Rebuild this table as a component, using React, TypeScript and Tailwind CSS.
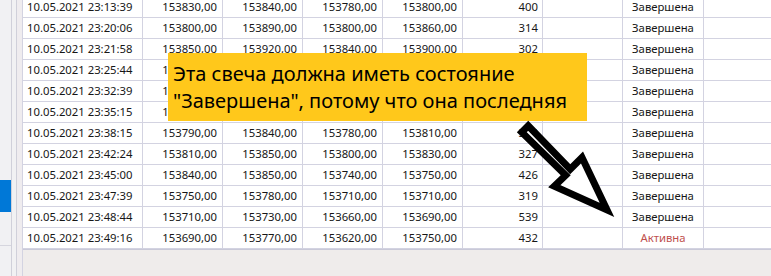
import React from "react";

type Row = {
  date: string;
  open: string;
  high: string;
  low: string;
  close: string;
  vol: string;
  state: "done" | "active";
};

const rows: Row[] = [
  { date: "10.05.2021 23:13:39", open: "153830,00", high: "153840,00", low: "153780,00", close: "153800,00", vol: "400", state: "done" },
  { date: "10.05.2021 23:20:06", open: "153800,00", high: "153890,00", low: "153800,00", close: "153860,00", vol: "314", state: "done" },
  { date: "10.05.2021 23:21:58", open: "153850,00", high: "153920,00", low: "153840,00", close: "153900,00", vol: "302", state: "done" },
  { date: "10.05.2021 23:25:44", open: "153890,00", high: "153910,00", low: "153820,00", close: "153850,00", vol: "287", state: "done" },
  { date: "10.05.2021 23:32:39", open: "153850,00", high: "153880,00", low: "153790,00", close: "153830,00", vol: "356", state: "done" },
  { date: "10.05.2021 23:35:15", open: "153830,00", high: "153860,00", low: "153770,00", close: "153790,00", vol: "341", state: "done" },
  { date: "10.05.2021 23:38:15", open: "153790,00", high: "153840,00", low: "153780,00", close: "153810,00", vol: "318", state: "done" },
  { date: "10.05.2021 23:42:24", open: "153810,00", high: "153850,00", low: "153800,00", close: "153830,00", vol: "327", state: "done" },
  { date: "10.05.2021 23:45:00", open: "153840,00", high: "153850,00", low: "153740,00", close: "153750,00", vol: "426", state: "done" },
  { date: "10.05.2021 23:47:39", open: "153750,00", high: "153780,00", low: "153710,00", close: "153710,00", vol: "319", state: "done" },
  { date: "10.05.2021 23:48:44", open: "153710,00", high: "153730,00", low: "153660,00", close: "153690,00", vol: "539", state: "done" },
  { date: "10.05.2021 23:49:16", open: "153690,00", high: "153770,00", low: "153620,00", close: "153750,00", vol: "432", state: "active" },
];

const cell = "h-[21px] border-r border-b border-[#d3d3e1] flex items-center overflow-hidden whitespace-nowrap";

const App = () => {
  return (
    <div
      className="relative flex h-[276px] w-[771px] overflow-hidden bg-[#efeceb] text-[#161616]"
      style={{ fontFamily: '"Noto Sans", "Open Sans", sans-serif' }}
    >
      {/* splitter strip */}
      <div className="flex w-[12px] flex-col border-r border-[#d0d0da] bg-[#f1f1f3]">
        <div className="h-[180px]"></div>
        <div className="h-[32px] bg-[#0078d7]"></div>
        <div className="h-[34px] border-b border-[#d6d6de]"></div>
      </div>
      <div className="w-[5px] border-r border-[#d0d0da] bg-[#f1f1f3]"></div>
      <div className="w-[5px] bg-[#efecef]"></div>

      {/* grid */}
      <div className="flex-1 border-l border-[#d3d3e1]">
        <div className="mt-[-3px] border-b border-[#c9c9d8] bg-white text-[11.3px]">
          {rows.map((r, i) => (
            <div key={i} className="grid grid-cols-[120px_80px_80px_80px_80px_80px_80px_81px_1fr]">
              <div className={cn(cell, "pl-[4px]")}>{r.date}</div>
              <div className={cn(cell, "justify-end pr-[5px]")}>{r.open}</div>
              <div className={cn(cell, "justify-end pr-[5px]")}>{r.high}</div>
              <div className={cn(cell, "justify-end pr-[5px]")}>{r.low}</div>
              <div className={cn(cell, "justify-end pr-[5px]")}>{r.close}</div>
              <div className={cn(cell, "justify-end pr-[4px]")}>{r.vol}</div>
              <div className={cell}></div>
              <div className={cn(cell, "justify-center")}>
                {r.state === "active" ? (
                  <span className="text-[#c0504d]">Активна</span>
                ) : (
                  "Завершена"
                )}
              </div>
              <div className="h-[21px] border-b border-[#d3d3e1]"></div>
            </div>
          ))}
        </div>
      </div>

      {/* callout */}
      <div className="absolute left-[168px] top-[53px] h-[68px] w-[419px] bg-[#ffc81b] pl-[5px] pt-[7px] text-[20px] leading-[27px] text-black">
        <div>Эта свеча должна иметь состояние</div>
        <div>"Завершена", потому что она последняя</div>
      </div>

      {/* arrow */}
      <svg className="absolute left-0 top-0" width="771" height="276" viewBox="0 0 771 276">
        <polygon
          points="528.2,125.8 570.2,169.3 582,157.5 607,210 554.3,186.2 565.7,175.3 521.8,132.2"
          fill="#fff"
          stroke="#000"
          strokeWidth="7"
          strokeLinejoin="miter"
        />
      </svg>
    </div>
  );
};

function cn(...c: string[]) {
  return c.join(" ");
}

export default App;
